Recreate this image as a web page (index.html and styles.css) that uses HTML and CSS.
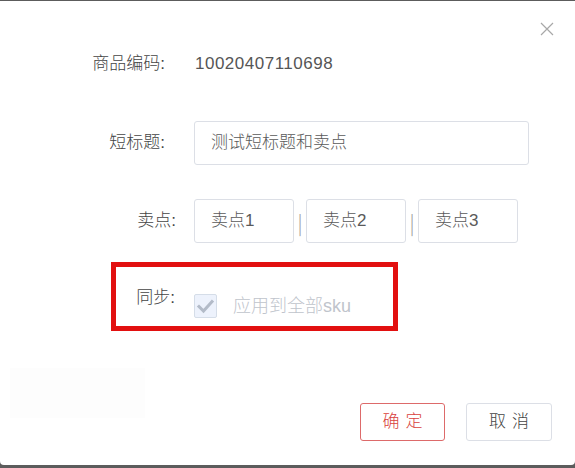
FILE: index.html
```html
<!DOCTYPE html>
<html lang="zh-CN">
<head>
<meta charset="utf-8">
<title>编辑</title>
<link rel="stylesheet" href="styles.css">
</head>
<body>
<div class="dialog">
  <button class="close" aria-label="关闭">
    <svg width="14" height="14" viewBox="0 0 14 14"><path d="M1 1 L13 13 M13 1 L1 13" stroke="#a8a8a8" stroke-width="1.2" fill="none"/></svg>
  </button>
  <div class="form">
    <div class="row row-code">
      <div class="label label-wide">商品编码:</div>
      <div class="value">10020407110698</div>
    </div>
    <div class="row row-title">
      <div class="label label-wide">短标题:</div>
      <div class="field field-long">测试短标题和卖点</div>
    </div>
    <div class="row row-points">
      <div class="label">卖点:</div>
      <div class="points">
        <div class="field field-short">卖点1</div>
        <span class="sep">|</span>
        <div class="field field-short">卖点2</div>
        <span class="sep">|</span>
        <div class="field field-short">卖点3</div>
      </div>
    </div>
    <div class="row row-sync">
      <div class="label label-sync">同步:</div>
      <div class="sync">
        <span class="checkbox">
          <svg width="23" height="24" viewBox="0 0 23 24"><path d="M5 12.5 L9.5 17 L18 7.5" stroke="#b3bbc8" stroke-width="3" fill="none" stroke-linecap="square"/></svg>
        </span>
        <span class="sync-text">应用到全部sku</span>
      </div>
      <div class="highlight"></div>
    </div>
  </div>
  <div class="footer">
    <div class="ghost"></div>
    <div class="buttons">
      <button class="btn btn-primary">确定</button>
      <button class="btn btn-default">取消</button>
    </div>
  </div>
</div>
</body>
</html>
```
FILE: styles.css
```css
html, body {
  margin: 0;
  padding: 0;
}
body {
  background: #5c5c5c;
  font-family: "Liberation Sans", "Noto Sans CJK SC", sans-serif;
  font-size: 17px;
  font-weight: 300;
  color: #444;
  height: 468px;
  overflow: hidden;
}
.dialog {
  position: relative;
  margin-top: 1px;
  height: 464px;
  box-sizing: border-box;
  background: #fff;
  border-radius: 0 0 4px 4px;
  padding-top: 51px;
}
.close {
  position: absolute;
  left: 540px;
  top: 21px;
  width: 14px;
  height: 14px;
  padding: 0;
  border: 0;
  background: none;
  display: block;
}
.close svg { display: block; }
.form {
  display: flex;
  flex-direction: column;
}
.row {
  display: grid;
  grid-template-columns: 176px auto;
  column-gap: 18px;
  align-items: center;
}
.label {
  text-align: right;
  color: #444;
  line-height: 24px;
  white-space: nowrap;
}
.label-wide {
  padding-right: 11px;
}
.row-code {
  line-height: 24px;
}
.value {
  color: #555;
  padding-left: 1px;
  letter-spacing: 0.5px;
}
.row-title {
  margin-top: 45px;
}
.field {
  box-sizing: border-box;
  height: 44px;
  line-height: 42px;
  border: 1px solid #dcdfe6;
  border-radius: 3px;
  padding-left: 16px;
  color: #5a5a5a;
  background: #fff;
}
.field-long {
  width: 335px;
}
.row-points {
  margin-top: 34px;
}
.points {
  display: flex;
  align-items: center;
}
.field-short {
  width: 100px;
}
.sep {
  width: 12px;
  text-align: center;
  color: #999;
  font-family: "Noto Sans CJK SC", sans-serif;
  font-weight: 300;
  font-size: 20px;
  line-height: 24px;
  padding-top: 3px;
}
.row-sync {
  position: relative;
  margin-top: 43px;
  align-items: start;
  height: 31px;
}
.label-sync {
  padding-right: 1px;
}
.sync {
  display: flex;
  align-items: center;
  margin-top: 7px;
}
.checkbox {
  box-sizing: border-box;
  width: 23px;
  height: 24px;
  background: #edf2fc;
  border: 1px solid #d5dde8;
  border-radius: 2px;
  display: block;
}
.checkbox svg {
  display: block;
  margin: -1px 0 0 -1px;
}
.sync-text {
  margin-left: 16px;
  color: #c0c4cc;
  font-size: 18px;
  line-height: 24px;
  padding-top: 1px;
}
.highlight {
  position: absolute;
  left: 111px;
  top: -24px;
  width: 287px;
  height: 69px;
  box-sizing: border-box;
  border: 5px solid #e21010;
}
.footer {
  margin-top: 51px;
  display: flex;
  justify-content: space-between;
  align-items: flex-start;
  padding-right: 23px;
}
.ghost {
  margin-left: 10px;
  width: 135px;
  height: 50px;
  background: #fdfdfd;
}
.buttons {
  display: flex;
  gap: 21px;
  margin-top: 35px;
}
.btn {
  box-sizing: border-box;
  height: 38px;
  border-radius: 3px;
  background: #fff;
  font-family: "Liberation Sans", "Noto Sans CJK SC", sans-serif;
  font-size: 17px;
  font-weight: 300;
  letter-spacing: 6px;
  padding: 0 0 0 6px;
  line-height: 36px;
  cursor: pointer;
}
.btn-primary {
  width: 85px;
  border: 1px solid #dd6a6a;
  color: #d9413c;
}
.btn-default {
  width: 86px;
  border: 1px solid #dcdfe6;
  color: #444;
}
```
